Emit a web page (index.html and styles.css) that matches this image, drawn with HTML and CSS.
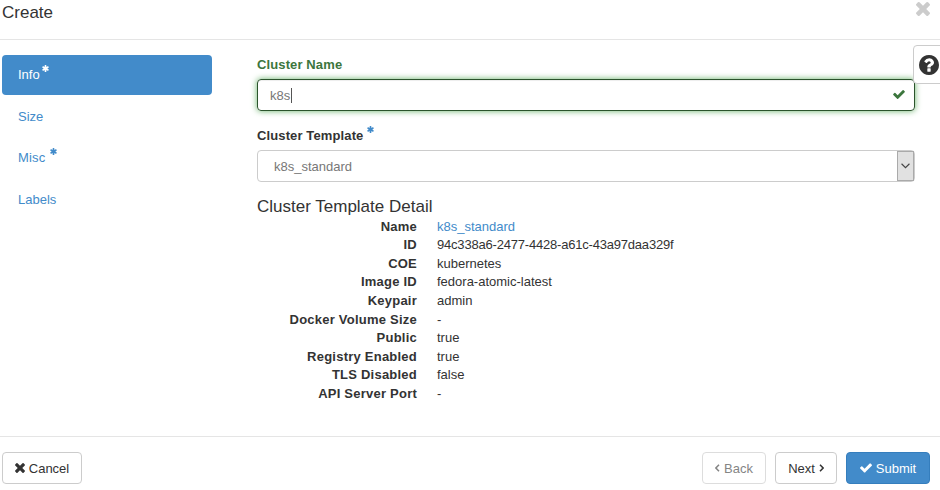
FILE: index.html
```
<!DOCTYPE html>
<html lang="en">
<head>
<meta charset="utf-8">
<title>Create</title>
<link rel="stylesheet" href="styles.css">
</head>
<body>
<svg class="defs" aria-hidden="true">
  <symbol id="times" viewBox="302 302 1188 1188"><path d="M1490 1322q0 40-28 68l-136 136q-28 28-68 28t-68-28l-294-294-294 294q-28 28-68 28t-68-28l-136-136q-28-28-28-68t28-68l294-294-294-294q-28-28-28-68t28-68l136-136q28-28 68-28t68 28l294 294 294-294q28-28 68-28t68 28l136 136q28 28 28 68t-28 68l-294 294 294 294q28 28 28 68z" transform="translate(0 -64)"/></symbol>
  <symbol id="check" viewBox="121 334 1550 1188"><path d="M1671 566q0 40-28 68l-724 724-136 136q-28 28-68 28t-68-28l-136-136-362-362q-28-28-28-68t28-68l136-136q28-28 68-28t68 28l294 295 656-657q28-28 68-28t68 28l136 136q28 28 28 68z"/></symbol>
  <symbol id="asterisk" viewBox="178 128 1436 1536"><path d="M1546 1050q46 26 59.500 77.500t-12.500 97.500l-64 110q-26 46-77.500 59.500t-97.500-12.500l-266-153v307q0 52-38 90t-90 38h-128q-52 0-90-38t-38-90v-307l-266 153q-46 26-97.500 12.500t-77.500-59.500l-64-110q-26-46-12.500-97.500t59.500-77.500l266-154-266-154q-46-26-59.500-77.500t12.500-97.500l64-110q26-46 77.500-59.500t97.500 12.500l266 153v-307q0-52 38-90t90-38h128q52 0 90 38t38 90v307l266-153q46-26 97.500-12.500t77.500 59.500l64 110q26 46 12.500 97.500t-59.500 77.500l-266 154z"/></symbol>
  <symbol id="question" viewBox="128 128 1536 1536"><path d="M1024 1376v-192q0-14-9-23t-23-9h-192q-14 0-23 9t-9 23v192q0 14 9 23t23 9h192q14 0 23-9t9-23zm256-672q0-88-55.500-163t-138.500-116-170-41q-243 0-371 213-15 24 8 42l132 100q7 6 19 6 16 0 25-12 53-68 86-92 34-24 86-24 48 0 85.500 26t37.500 59q0 38-20 61t-68 45q-63 28-115.500 86.500t-52.500 125.500v36q0 14 9 23t23 9h192q14 0 23-9t9-23q0-19 21.500-49.500t54.500-49.500q32-18 49-28.500t46-35 44.500-48 28-60.500 12.500-81zm384 192q0 209-103 385.500t-279.500 279.500-385.500 103-385.500-103-279.500-279.500-103-385.500 103-385.500 279.500-279.500 385.500-103 385.500 103 279.500 279.500 103 385.500z"/></symbol>
</svg>
<div class="modal">
  <header class="modal-header">
    <h1>Create</h1>
    <svg class="close"><use href="#times"/></svg>
  </header>
  <main class="modal-body">
    <nav class="steps">
      <a class="step active">Info<svg class="required"><use href="#asterisk"/></svg></a>
      <a class="step">Size</a>
      <a class="step misc">Misc<svg class="required"><use href="#asterisk"/></svg></a>
      <a class="step">Labels</a>
    </nav>
    <section class="content">
      <div class="label success">Cluster Name</div>
      <div class="input focused"><span>k8s</span><i class="caret"></i><svg class="valid"><use href="#check"/></svg></div>
      <div class="label second">Cluster Template<svg class="required"><use href="#asterisk"/></svg></div>
      <div class="input select"><span>k8s_standard</span><div class="drop"><svg viewBox="0 0 8 5"><path d="M.5.5 4 4 7.500.5"/></svg></div></div>
      <h2>Cluster Template Detail</h2>
      <dl>
        <dt>Name</dt><dd><a>k8s_standard</a></dd>
        <dt>ID</dt><dd class="id">94c338a6-2477-4428-a61c-43a97daa329f</dd>
        <dt>COE</dt><dd>kubernetes</dd>
        <dt>Image ID</dt><dd>fedora-atomic-latest</dd>
        <dt>Keypair</dt><dd>admin</dd>
        <dt>Docker Volume Size</dt><dd>-</dd>
        <dt>Public</dt><dd>true</dd>
        <dt>Registry Enabled</dt><dd>true</dd>
        <dt>TLS Disabled</dt><dd>false</dd>
        <dt>API Server Port</dt><dd>-</dd>
      </dl>
    </section>
    <div class="help"><svg><use href="#question"/></svg></div>
  </main>
  <footer class="modal-footer">
    <div class="btn cancel"><svg><use href="#times"/></svg><span>Cancel</span></div>
    <div class="btn back"><svg class="angle" viewBox="0 0 5 8"><path d="M4 .8.900 4 4 7.200"/></svg><span>Back</span></div>
    <div class="btn next"><span>Next</span><svg class="angle" viewBox="0 0 5 8"><path d="M1 .8 4.100 4 1 7.200"/></svg></div>
    <div class="btn submit"><svg><use href="#check"/></svg><span>Submit</span></div>
  </footer>
</div>
</body>
</html>
```
FILE: styles.css
```
* { box-sizing: border-box; }
body {
  margin: 0;
  background: #fff;
  color: #333;
  font: 13px/18.57px "Liberation Sans", Arial, sans-serif;
  overflow: hidden;
}
svg { fill: currentColor; flex: none; }
.defs { position: absolute; width: 0; height: 0; }
.modal { display: flex; flex-direction: column; height: 490px; }
.modal-header {
  display: flex;
  justify-content: space-between;
  height: 40px;
  padding: 3px 10px 0 2px;
  border-bottom: 1px solid #e5e5e5;
}
h1, h2 { margin: 0; font-size: 17px; font-weight: 400; line-height: 19px; }
.close { width: 14px; height: 14px; margin-top: -1px; color: #ccc; }
.modal-body { position: relative; display: flex; flex: 1; }
.steps { width: 210px; margin: 15px 0 0 2px; }
.step {
  display: flex;
  height: 40px;
  margin-bottom: 1.700px;
  padding: 11px 16px 0;
  color: #428bca;
  border-radius: 4px;
}
.step.active { color: #fff; background: #428bca; }
.required { width: 7px; height: 7px; margin: 0 0 0 4px; color: #428bca; }
.active .required { margin-left: 2px; color: #fff; }
.step .required { margin-top: -1px; }
.misc { letter-spacing: .2px; }
.content { width: 658px; margin: 16px 0 0 45px; }
.label { display: flex; height: 23px; font-weight: 700; letter-spacing: .12px; }
.label.success { color: #3c763d; }
.label.second { height: 24px; margin-top: 15px; padding-top: 1px; }
.second .required { margin-top: -1px; }
.input {
  display: flex;
  align-items: center;
  height: 32px;
  padding-left: 12px;
  color: #777;
  border: 1px solid #ccc;
  border-radius: 4px;
}
.input span { padding-top: 2px; }
.focused { border-color: #2b542c; box-shadow: inset 0 1px 1px rgba(0,0,0,.075), 0 0 6px #67b168; }
.caret { width: 1px; height: 15px; margin-left: 1px; background: #555; }
.valid { width: 12px; height: 9px; margin: -1px 9px 0 auto; color: #3c763d; }
.select { padding-left: 16px; }
.drop {
  display: grid;
  place-items: center;
  width: 17px;
  height: 30px;
  margin-left: auto;
  border: 1px solid #aaa;
  background: #e1e1e1;
}
.drop svg { width: 9px; height: 6px; fill: none; stroke: #444; stroke-width: 1; }
h2 { margin-top: 15px; height: 20.800px; }
dl {
  display: grid;
  grid-template-columns: 160px 1fr;
  grid-auto-rows: 18.57px;
  column-gap: 20px;
  margin: 0;
}
dt { font-weight: 700; text-align: right; letter-spacing: .23px; }
dd { margin: 0; }
dd a { color: #428bca; }
.id { letter-spacing: -.2px; }
.help {
  position: absolute;
  top: 5px;
  right: -4px;
  width: 31px;
  height: 39px;
  padding: 9px 0 0 5px;
  background: #fff;
  border: 1px solid #ccc;
  border-radius: 4px;
}
.help svg { display: block; width: 20px; height: 20px; }
.modal-footer {
  display: flex;
  height: 54px;
  padding: 15px 10px 0 2px;
  border-top: 1px solid #e5e5e5;
  gap: 9px;
}
.btn {
  display: flex;
  align-items: center;
  justify-content: center;
  gap: 4px;
  height: 32px;
  border: 1px solid #ccc;
  border-radius: 4px;
}
.btn span { padding-top: 2px; }
.cancel { width: 80px; margin-right: auto; }
.cancel svg { width: 10px; height: 10px; }
.back { width: 64px; color: #858585; border-color: #ddd; }
.next { width: 62px; }
.submit { width: 84px; color: #fff; background: #428bca; border-color: #357ebd; }
.submit svg { width: 12px; height: 10px; }
.btn .angle { width: 5px; height: 8px; fill: none; stroke: currentColor; stroke-width: 1.500; }
```
